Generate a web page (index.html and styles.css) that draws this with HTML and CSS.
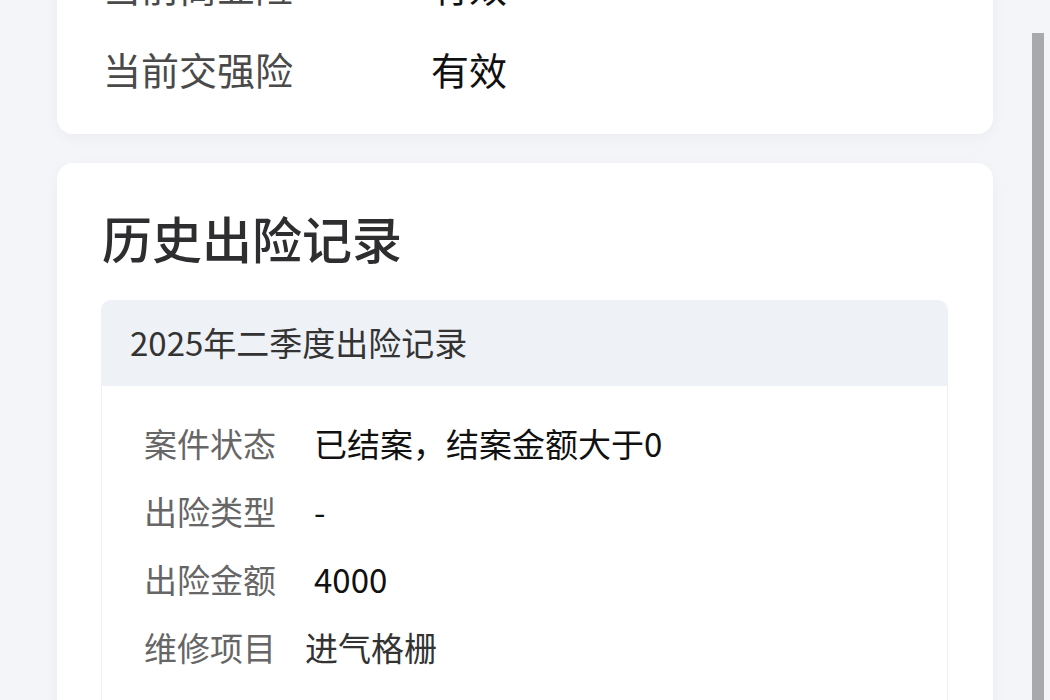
FILE: index.html
```html
<!DOCTYPE html>
<html lang="zh-CN">
<head>
    <meta charset="UTF-8">
    <meta name="viewport" content="width=device-width, initial-scale=1.0">
    <title>车辆出险记录</title>
    <link rel="stylesheet" href="styles.css">
</head>
<body>
    <div class="page">
        <div class="card card-insurance">
            <div class="info-row">
                <span class="info-label">当前商业险</span>
                <span class="info-value">有效</span>
            </div>
            <div class="info-row">
                <span class="info-label">当前交强险</span>
                <span class="info-value">有效</span>
            </div>
        </div>

        <div class="card card-history">
            <h2 class="card-title">历史出险记录</h2>
            <div class="record">
                <div class="record-head">2025年二季度出险记录</div>
                <div class="record-body">
                    <div class="record-row">
                        <span class="record-label">案件状态</span>
                        <span class="record-value">已结案，结案金额大于0</span>
                    </div>
                    <div class="record-row">
                        <span class="record-label">出险类型</span>
                        <span class="record-value">-</span>
                    </div>
                    <div class="record-row">
                        <span class="record-label">出险金额</span>
                        <span class="record-value">4000</span>
                    </div>
                    <div class="record-row record-row-list">
                        <span class="record-label">维修项目</span>
                        <span class="record-value">
                            <span class="list-item">进气格栅</span>
                            <span class="list-item">保险杠</span>
                        </span>
                    </div>
                </div>
            </div>
        </div>
    </div>
    <div class="scroll-thumb"></div>
</body>
</html>
```

FILE: styles.css
```css
html, body {
    margin: 0;
    padding: 0;
    height: 100%;
    overflow: hidden;
}
body {
    background-color: #f4f5f8;
    font-family: "Noto Sans CJK SC", "Noto Sans", sans-serif;
    color: #111;
}
.page {
    width: 936px;
    padding-left: 57px;
    display: flex;
    flex-direction: column;
    gap: 29px;
}
.card {
    background-color: #fff;
    border-radius: 16px;
    box-shadow: 0 4px 14px rgba(30, 40, 60, 0.04);
}
.card-insurance {
    margin-top: -80px;
    padding: 24px 46px;
}
.info-row {
    display: flex;
    height: 83px;
    align-items: center;
    font-size: 38px;
}
.info-label {
    width: 328px;
    color: #4a4a4a;
}
.info-value {
    color: #111;
}
.card-history {
    padding: 40px 45px 40px 44px;
}
.card-title {
    margin: 0 0 29px 1px;
    font-size: 50px;
    line-height: 68px;
    font-weight: 500;
    color: #2e2e30;
}
.record {
    border-radius: 10px;
    overflow: hidden;
}
.record-head {
    height: 86px;
    display: flex;
    align-items: center;
    padding: 0 0 3px 29px;
    box-sizing: border-box;
    background-color: #eef1f6;
    font-size: 33px;
    color: #333;
}
.record-body {
    padding: 23px 0 40px 42px;
    border: 1px solid #efeff2;
    border-top: none;
}
.record-row {
    display: flex;
    line-height: 68px;
    font-size: 33px;
}
.record-label {
    width: 170px;
    flex-shrink: 0;
    color: #666;
}
.record-row-list .record-label {
    width: 161px;
}
.record-value {
    color: #111;
    display: flex;
    flex-direction: column;
}
.record-row-list .record-value {
    color: #333;
}
.scroll-thumb {
    position: fixed;
    top: 33px;
    right: 6px;
    width: 12px;
    height: 700px;
    background-color: #a9a9ad;
}
```
